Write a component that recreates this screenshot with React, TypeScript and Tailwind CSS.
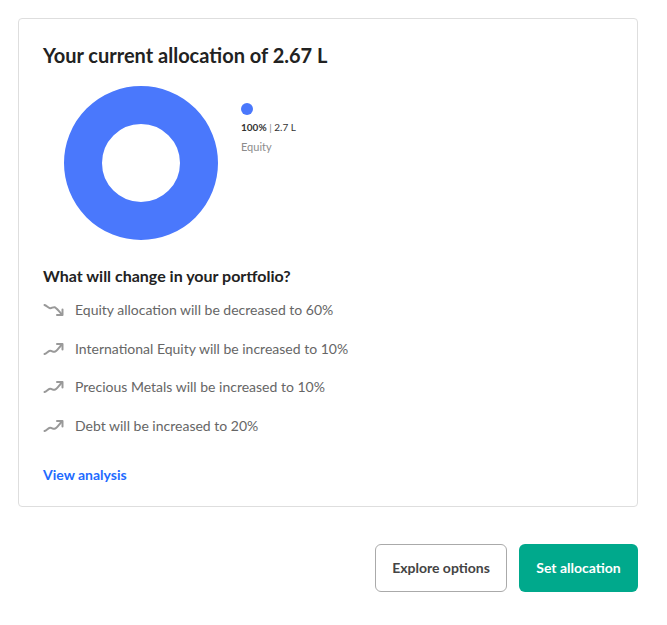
import React from "react";

const changes = [
  { dir: "down", text: "Equity allocation will be decreased to 60%" },
  { dir: "up", text: "International Equity will be increased to 10%" },
  { dir: "up", text: "Precious Metals will be increased to 10%" },
  { dir: "up", text: "Debt will be increased to 20%" },
];

function TrendIcon({ dir }: { dir: string }) {
  // wavy trend line with an arrow head
  const flip = dir === "down" ? "scale(1,-1) translate(0,-14)" : undefined;
  return (
    <svg width="22" height="14" viewBox="0 0 22 14" fill="none" stroke="#999" strokeWidth="2" strokeLinecap="round" strokeLinejoin="round">
      <g transform={flip}>
        <path d="M1.5 12 C3.5 11.5 5 9 7 8.8 C9 8.6 9.5 10 11.5 9.8 C13.5 9.5 15.5 6 19 2.5" />
        <path d="M14 2 L19.5 2 L19.5 7.5" />
      </g>
    </svg>
  );
}

export default function App() {
  return (
    <div className="min-h-[625px] bg-white pt-[18px] pl-[18px] pr-[29px] pb-[18px] font-['Lato','Noto_Sans',sans-serif] text-[#222]">
      {/* allocation card */}
      <div className="rounded border border-[#dedede] pl-[24px] pr-[24px] pt-[22px] pb-[21px]">
        <h2 className="text-[20px] font-bold leading-[28px] text-[#222]">
          Your current allocation of 2.67 L
        </h2>

        <div className="mt-[17px] flex items-start">
          <svg width="154" height="154" viewBox="0 0 154 154" className="ml-[21px] shrink-0">
            <circle cx="77" cy="77" r="58" fill="none" stroke="#4a78fc" strokeWidth="38" />
          </svg>
          <div className="ml-[23px] mt-[17px]">
            <div className="h-[12px] w-[12px] rounded-full bg-[#4a78fc]" />
            <div className="mt-[4px] text-[10px] leading-[16px] text-[#333]">
              <span className="font-bold">100%</span> <span className="text-[#888]">|</span> 2.7 L
            </div>
            <div className="mt-[4px] text-[11px] leading-[16px] text-[#8c8c8c]">Equity</div>
          </div>
        </div>

        <h3 className="mt-[24px] text-[16px] font-bold leading-[24px] text-[#222]">
          What will change in your portfolio?
        </h3>

        <div className="mt-[12px] flex flex-col gap-[18.5px]">
          {changes.map((c) => (
            <div key={c.text} className="flex h-[20px] items-center">
              <span className="flex w-[32px] shrink-0 items-center">
                <TrendIcon dir={c.dir} />
              </span>
              <span className="text-[14px] leading-[20px] text-[#666]">{c.text}</span>
            </div>
          ))}
        </div>

        <a className="mt-[29px] block text-[14px] font-bold leading-[20px] text-[#1e6bff]" href="#">
          View analysis
        </a>
      </div>

      {/* actions */}
      <div className="mt-[37px] flex justify-end gap-[12px]">
        <button className="h-[48px] w-[132px] rounded-md border border-[#aaa] bg-white text-[14px] font-bold text-[#444]">
          Explore options
        </button>
        <button className="h-[48px] w-[119px] rounded-md bg-[#00a98c] text-[14px] font-bold text-white">
          Set allocation
        </button>
      </div>
    </div>
  );
}
